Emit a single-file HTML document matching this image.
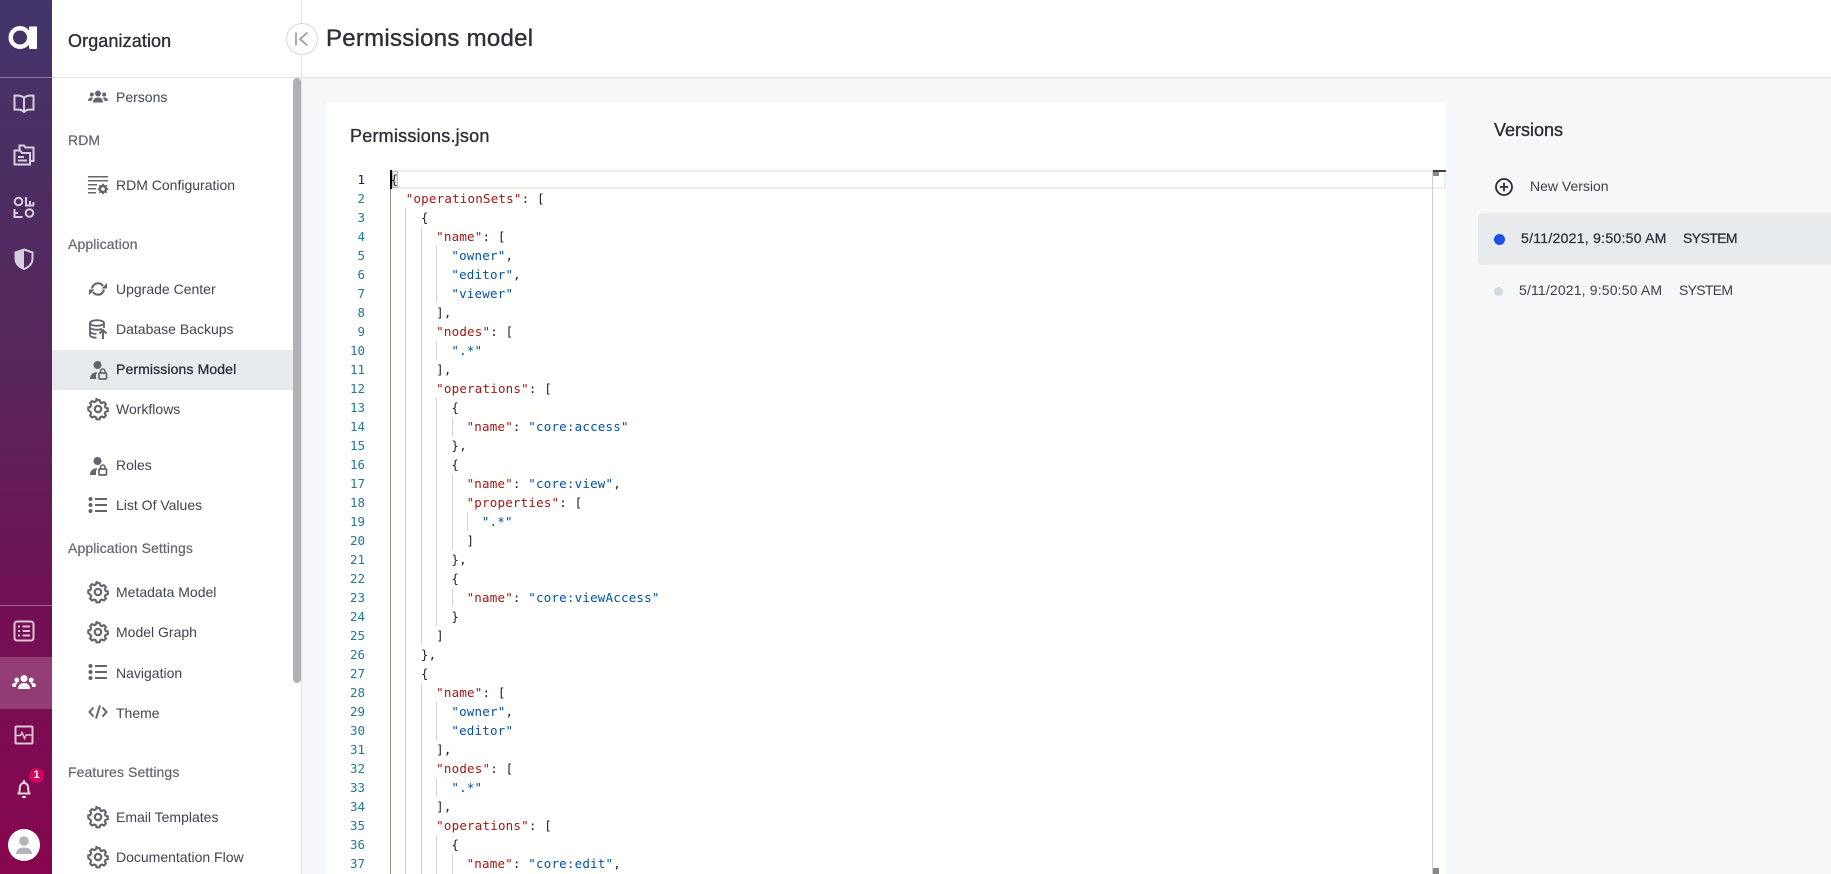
<!DOCTYPE html>
<html><head><meta charset="utf-8"><title>Permissions model</title>
<style>
*{box-sizing:border-box}
html,body{margin:0;padding:0;width:1831px;height:874px;overflow:hidden;background:#f6f7f9;font-family:"Liberation Sans",Arial,sans-serif;color:#333}
.a{position:absolute}
#rail{left:0;top:0;width:52px;height:874px;background:linear-gradient(180deg,#41356a 0%,#5a2459 45%,#720f52 70%,#87064e 100%)}
#side{left:52px;top:0;width:250px;height:874px;background:#fff;overflow:hidden}
#head{left:302px;top:0;width:1529px;height:78px;background:#fff;border-bottom:1px solid #dfe1e4}
.it{position:absolute;left:116px;font-size:14px;line-height:20px;color:#3f4450;white-space:nowrap}
.sec{position:absolute;left:68px;font-size:14px;line-height:20px;color:#62666f;white-space:nowrap;-webkit-text-stroke:.2px #62666f;letter-spacing:.1px}
.ic{position:absolute;left:88px;width:20px;height:20px;overflow:visible}
.r{position:absolute;left:12px;width:24px;height:24px;overflow:visible}
.h{position:absolute;font-size:18px;line-height:24px;color:#2b2f38;-webkit-text-stroke:.35px #2b2f38;white-space:nowrap}
.ln{position:absolute;width:30px;left:335px;text-align:right;font:12.5px/19px "DejaVu Sans Mono",monospace;color:#237893}
.c{position:absolute;left:390.5px;font:12.5px/19px "DejaVu Sans Mono",monospace;letter-spacing:.2px;word-spacing:-.12px;white-space:pre;color:#222}
.c i{font-style:normal;color:#a31515}.c b{font-weight:normal;color:#0451a5}
.g{position:absolute;width:1px;background:#d3d3d3}
.v{position:absolute;font-size:14px;line-height:20px;white-space:nowrap;color:#3a3e48}
</style></head><body>

<div class="a" id="rail"></div>
<div class="a" style="left:0;top:77px;width:52px;height:1px;background:rgba(255,255,255,.35)"></div>
<div class="a" style="left:0;top:605px;width:52px;height:1px;background:rgba(255,255,255,.35)"></div>
<div class="a" style="left:0;top:657px;width:52px;height:52px;background:rgba(255,255,255,.2)"></div>

<svg class="a" style="left:8px;top:24px" width="32" height="28" viewBox="0 0 32 28"><circle cx="12" cy="13.500" r="9.250" fill="none" stroke="#fff" stroke-width="4.500"/><rect x="21" y="2.500" width="8" height="22.500" fill="#fff"/></svg>

<svg class="r" style="top:91px" viewBox="0 0 24 24" fill="none" stroke="#d6cfdc" stroke-width="2"><path d="M12 7C10.500 5 8 4.500 2.500 4.500v14c4 0 6.500 0 8 1.300l1.500 1.200 1.500-1.200c1.500-1.300 4-1.300 8-1.300v-14C16 4.500 13.500 5 12 7zM12 7v13"/></svg>
<svg class="r" style="top:143px" viewBox="0 0 24 24" fill="none" stroke="#d6cfdc" stroke-width="2"><path d="M7.500 7V2.500h4.500l1.500 2h8V18H18"/><path d="M2.500 7.500H8l2 2.500h8v11.500H2.500z"/><path d="M6 14h6M6 17.500h9"/></svg>
<svg class="r" style="top:195px" viewBox="0 0 24 24" fill="none" stroke="#d6cfdc" stroke-width="2"><circle cx="6.500" cy="6.500" r="3.800"/><circle cx="17.500" cy="18" r="3.800"/><path d="M14 2v8.500h8M18 6v4.500M21.500 7v3.500M2.500 14v8h8M2.500 18h3.500"/></svg>
<svg class="r" style="top:247px" viewBox="0 0 24 24"><path d="M12 2.500l8.500 3v6c0 5-3.500 8.500-8.500 10.500-5-2-8.500-5.500-8.500-10.500v-6z" fill="none" stroke="#d6cfdc" stroke-width="2"/><path d="M12 2.500v19.500c-5-2-8.500-5.500-8.500-10.500v-6z" fill="#d6cfdc"/></svg>

<svg class="r" style="top:619px" viewBox="0 0 24 24" fill="none" stroke="#d9c6d4" stroke-width="2"><rect x="2.500" y="2.500" width="19" height="19" rx="2.500"/><path d="M6 7.500h2M6 12h2M6 16.500h2M10.500 7.500H18M10.500 12H18M10.500 16.500H18"/></svg>
<svg class="r" style="top:671px" viewBox="0 0 24 24" fill="#fff"><circle cx="12" cy="7.500" r="3.500"/><circle cx="4.800" cy="9" r="2.400"/><circle cx="19.200" cy="9" r="2.400"/><path d="M6 18c0-4 2.500-6 6-6s6 2 6 6zM2 16c-1 0-2-.5-2-1.500 0-1.500 1.800-3 4.500-3 .8 0 1.300.2 1.300.2-1.300 1-2 2.500-2.100 4.300zM22 16c1 0 2-.5 2-1.500 0-1.500-1.800-3-4.500-3-.8 0-1.300.2-1.300.2 1.300 1 2 2.500 2.100 4.300z"/></svg>
<svg class="r" style="top:723px" viewBox="0 0 24 24" fill="none" stroke="#d9c6d4" stroke-width="2"><rect x="3.500" y="3.500" width="17" height="17" rx="1"/><path d="M4 12.500h4.500l1.500-3 2.500 6 1.500-3.500H20" stroke-width="1.500"/></svg>
<svg class="r" style="top:776px" viewBox="0 0 24 24" fill="none" stroke="#e8d5e0" stroke-width="2"><path d="M7 17c.5-1 .8-2.500.8-5 0-3 1.800-5 4.200-5s4.200 2 4.200 5c0 2.500.3 4 .8 5M5.500 17.500h13M10 21h4M12 4v3"/></svg>
<div class="a" style="left:29px;top:768px;width:15px;height:15px;border-radius:50%;background:#d6005f;color:#fff;font-size:11px;font-weight:bold;line-height:15px;text-align:center">1</div>
<div class="a" style="left:8px;top:829px;width:32px;height:32px;border-radius:50%;background:#fff;overflow:hidden"><svg width="32" height="32" viewBox="0 0 32 32" fill="#b5b5b8"><circle cx="16" cy="12" r="4.800"/><path d="M8 25c0-4.500 3.500-6.500 8-6.500s8 2 8 6.500z"/></svg></div>

<div class="a" id="side"></div>
<div class="a" style="left:52px;top:77px;width:250px;height:1px;background:#dfe1e4"></div>
<div class="a" style="left:52px;top:350px;width:241px;height:40px;background:#e7ebee"></div>
<div class="a" style="left:293px;top:78px;width:8px;height:605px;background:#b1b1b5;border-radius:4px"></div>

<div class="h" style="left:68px;top:29px;letter-spacing:.1px">Organization</div>

<div class="it" style="top:87px">Persons</div>
<div class="sec" style="top:130px">RDM</div>
<div class="it" style="top:175px">RDM Configuration</div>
<div class="sec" style="top:234px">Application</div>
<div class="it" style="top:279px">Upgrade Center</div>
<div class="it" style="top:319px">Database Backups</div>
<div class="it" style="top:359px;color:#2b2f38;-webkit-text-stroke:.3px #2b2f38;letter-spacing:.12px">Permissions Model</div>
<div class="it" style="top:399px">Workflows</div>
<div class="it" style="top:455px">Roles</div>
<div class="it" style="top:495px">List Of Values</div>
<div class="sec" style="top:538px">Application Settings</div>
<div class="it" style="top:582px">Metadata Model</div>
<div class="it" style="top:622px">Model Graph</div>
<div class="it" style="top:663px">Navigation</div>
<div class="it" style="top:703px">Theme</div>
<div class="sec" style="top:762px">Features Settings</div>
<div class="it" style="top:807px">Email Templates</div>
<div class="it" style="top:847px">Documentation Flow</div>

<svg width="0" height="0" style="position:absolute"><defs>
<g id="gear" fill="none" stroke="#62656e" stroke-width="2.200"><path d="M10 1.300l1.600.2.800 2.300 1.500.7 2.200-1 2 2-1 2.200.7 1.600 2.300.7v2.800l-2.300.8-.7 1.500 1 2.300-2 2-2.200-1-1.500.6-.8 2.300H8.500l-.8-2.300-1.500-.6-2.300 1-2-2 1-2.300-.6-1.500L0 11.800V9l2.300-.7.6-1.600-1-2.200 2-2 2.300 1 1.500-.7.800-2.300z" transform="translate(.3 -.3) scale(.97)"/><circle cx="10" cy="10" r="3.200"/></g>
<g id="lock" fill="#62656e"><circle cx="9.500" cy="6" r="4"/><path d="M2 20c-.3-3 2-6.500 6.800-7 .5 1-.2 1.800-.8 3v4z"/><path d="M12.500 14v-1.500c0-1.400 1-2.500 2.300-2.500s2.300 1.100 2.300 2.500V14" fill="none" stroke="#62656e" stroke-width="1.600"/><rect x="11" y="14" width="7.500" height="6" rx="1" fill="none" stroke="#62656e" stroke-width="1.700"/></g>
<g id="list" fill="#62656e"><rect x="7" y="3" width="12" height="2"/><rect x="7" y="9" width="12" height="2"/><rect x="7" y="15" width="12" height="2"/><circle cx="2.500" cy="4" r="2"/><circle cx="2.500" cy="10" r="2"/><circle cx="2.500" cy="16" r="2"/></g>
</defs></svg>

<svg class="ic" style="top:87px" viewBox="0 0 20 20" fill="#62656e"><circle cx="10" cy="6.500" r="3"/><circle cx="3.800" cy="7.500" r="2"/><circle cx="16.200" cy="7.500" r="2"/><path d="M5 15.500c0-3.500 2-5 5-5s5 1.500 5 5zM0 13.800c0-1.800 1.500-3.400 4-3.400.6 0 1 .1 1.200.3-.9.900-1.700 2-1.800 3.300zM20 13.800c0-1.800-1.500-3.400-4-3.400-.6 0-1 .1-1.200.3.900.9 1.700 2 1.800 3.300z"/></svg>
<svg class="ic" style="top:175px" viewBox="0 0 20 20" fill="#62656e"><rect x="0" y="1" width="20" height="1.500"/><rect x="0" y="5" width="20" height="1.500"/><rect x="0" y="9" width="9" height="1.500"/><rect x="0" y="13" width="8" height="1.500"/><rect x="0" y="17" width="8" height="1.500"/><circle cx="15" cy="14" r="3" fill="none" stroke="#62656e" stroke-width="2.400"/><path d="M15 8.700v2M15 17.300v2M9.700 14h2M18.300 14h2M11.300 10.300l1.400 1.400M17.300 16.300l1.400 1.400M11.300 17.700l1.400-1.400M17.300 11.700l1.400-1.400" stroke="#62656e" stroke-width="1.800"/></svg>
<svg class="ic" style="top:279px" viewBox="0 0 20 20" fill="none" stroke="#62656e" stroke-width="2.200"><path d="M4 9.500C4.700 6.300 7 4.300 10 4.300c2.300 0 4 1 5 2.700M16 10.500c-.7 3.200-3 5.200-6 5.200-2.300 0-4-1-5-2.700"/><path d="M19 4v5.500h-5.500zM1 16v-5.500h5.500z" fill="#62656e" stroke="none"/></svg>
<svg class="ic" style="top:319px" viewBox="0 0 20 20" fill="none" stroke="#62656e" stroke-width="1.800"><ellipse cx="9" cy="4" rx="7" ry="2.800"/><path d="M2 4v12c0 1.600 3 2.800 6.500 2.800M16 4v5M2 8c0 1.600 3 2.800 7 2.800 2 0 3.500-.3 5-1M2 12.200c0 1.500 3 2.800 6.500 2.800"/><path d="M15 20v-8M11.500 14.500L15 11l3.500 3.500" stroke-width="2"/></svg>
<svg class="ic" style="top:359px"><use href="#lock"/></svg>
<svg class="ic" style="top:399px"><use href="#gear"/></svg>
<svg class="ic" style="top:455px"><use href="#lock"/></svg>
<svg class="ic" style="top:495px"><use href="#list"/></svg>
<svg class="ic" style="top:582px"><use href="#gear"/></svg>
<svg class="ic" style="top:622px"><use href="#gear"/></svg>
<svg class="ic" style="top:662px"><use href="#list"/></svg>
<svg class="ic" style="top:702px" viewBox="0 0 20 20" fill="none" stroke="#62656e" stroke-width="2"><path d="M5.500 5.500L1.500 10l4 4.500M14.500 5.500l4 4.500-4 4.500M12 3.500L8 16.500"/></svg>
<svg class="ic" style="top:807px"><use href="#gear"/></svg>
<svg class="ic" style="top:847px"><use href="#gear"/></svg>

<div class="a" id="head"></div>
<div class="a" style="left:301px;top:0;width:1px;height:874px;background:#dfe1e4"></div>
<div class="a" style="left:326px;top:24px;font-size:24px;line-height:30px;color:#2b2f38;-webkit-text-stroke:.35px #2b2f38;white-space:nowrap;letter-spacing:.27px">Permissions model</div>
<div class="a" style="left:286px;top:23px;width:32px;height:32px;border-radius:50%;background:#fff;border:1px solid #d8d8da"></div>
<svg class="a" style="left:294px;top:31px" width="16" height="16" viewBox="0 0 16 16" fill="none" stroke="#9a9ca3" stroke-width="1.700"><path d="M2 1.500v13M13.500 1.500L6 8l7.500 6.500"/></svg>

<!-- Card -->
<div class="a" style="left:326px;top:102px;width:1120px;height:772px;background:#fff;border-radius:4px 4px 0 0"></div>
<div class="h" style="left:350px;top:124px;letter-spacing:.22px">Permissions.json</div>

<div class="a" style="left:390px;top:170px;width:1056px;height:704px;background:#fffffe"></div>
<div class="a" style="left:391px;top:170px;width:1055px;height:19px;border:2px solid #eeeeee"></div>
<div class="a" style="left:390px;top:189px;width:1px;height:685px;background:#8d8d8d"></div>
<div class="a" style="left:390px;top:170px;width:2px;height:19px;background:#000"></div>
<div class="a" style="left:392px;top:171px;width:6px;height:17px;background:#e3eee8;border:1px solid #b9b9b9"></div>
<div class="a" style="left:1432px;top:170px;width:1px;height:704px;background:#cfcfcf"></div>
<div class="a" style="left:1433px;top:170px;width:13px;height:2px;background:#444"></div>
<div class="a" style="left:1433px;top:172px;width:6px;height:4px;background:#888"></div>
<div class="a" style="left:1433px;top:868px;width:6px;height:6px;background:#888"></div>

<div class="g" style="left:405px;top:208px;height:666px"></div>
<div class="g" style="left:421px;top:227px;height:418px"></div>
<div class="g" style="left:421px;top:683px;height:191px"></div>
<div class="g" style="left:436px;top:246px;height:57px"></div>
<div class="g" style="left:436px;top:341px;height:19px"></div>
<div class="g" style="left:436px;top:398px;height:228px"></div>
<div class="g" style="left:436px;top:702px;height:38px"></div>
<div class="g" style="left:436px;top:778px;height:19px"></div>
<div class="g" style="left:436px;top:835px;height:39px"></div>
<div class="g" style="left:452px;top:417px;height:19px"></div>
<div class="g" style="left:452px;top:474px;height:76px"></div>
<div class="g" style="left:452px;top:588px;height:19px"></div>
<div class="g" style="left:452px;top:854px;height:20px"></div>
<div class="g" style="left:467px;top:512px;height:19px"></div>

<div class="ln" style="top:170px;color:#0b216f">1</div><div class="ln" style="top:189px">2</div><div class="ln" style="top:208px">3</div><div class="ln" style="top:227px">4</div><div class="ln" style="top:246px">5</div><div class="ln" style="top:265px">6</div><div class="ln" style="top:284px">7</div><div class="ln" style="top:303px">8</div><div class="ln" style="top:322px">9</div><div class="ln" style="top:341px">10</div><div class="ln" style="top:360px">11</div><div class="ln" style="top:379px">12</div><div class="ln" style="top:398px">13</div><div class="ln" style="top:417px">14</div><div class="ln" style="top:436px">15</div><div class="ln" style="top:455px">16</div><div class="ln" style="top:474px">17</div><div class="ln" style="top:493px">18</div><div class="ln" style="top:512px">19</div><div class="ln" style="top:531px">20</div><div class="ln" style="top:550px">21</div><div class="ln" style="top:569px">22</div><div class="ln" style="top:588px">23</div><div class="ln" style="top:607px">24</div><div class="ln" style="top:626px">25</div><div class="ln" style="top:645px">26</div><div class="ln" style="top:664px">27</div><div class="ln" style="top:683px">28</div><div class="ln" style="top:702px">29</div><div class="ln" style="top:721px">30</div><div class="ln" style="top:740px">31</div><div class="ln" style="top:759px">32</div><div class="ln" style="top:778px">33</div><div class="ln" style="top:797px">34</div><div class="ln" style="top:816px">35</div><div class="ln" style="top:835px">36</div><div class="ln" style="top:854px">37</div>

<div class="c" style="top:170px">{</div>
<div class="c" style="top:189px">  <i>"operationSets"</i>: [</div>
<div class="c" style="top:208px">    {</div>
<div class="c" style="top:227px">      <i>"name"</i>: [</div>
<div class="c" style="top:246px">        <b>"owner"</b>,</div>
<div class="c" style="top:265px">        <b>"editor"</b>,</div>
<div class="c" style="top:284px">        <b>"viewer"</b></div>
<div class="c" style="top:303px">      ],</div>
<div class="c" style="top:322px">      <i>"nodes"</i>: [</div>
<div class="c" style="top:341px">        <b>".*"</b></div>
<div class="c" style="top:360px">      ],</div>
<div class="c" style="top:379px">      <i>"operations"</i>: [</div>
<div class="c" style="top:398px">        {</div>
<div class="c" style="top:417px">          <i>"name"</i>: <b>"core:access"</b></div>
<div class="c" style="top:436px">        },</div>
<div class="c" style="top:455px">        {</div>
<div class="c" style="top:474px">          <i>"name"</i>: <b>"core:view"</b>,</div>
<div class="c" style="top:493px">          <i>"properties"</i>: [</div>
<div class="c" style="top:512px">            <b>".*"</b></div>
<div class="c" style="top:531px">          ]</div>
<div class="c" style="top:550px">        },</div>
<div class="c" style="top:569px">        {</div>
<div class="c" style="top:588px">          <i>"name"</i>: <b>"core:viewAccess"</b></div>
<div class="c" style="top:607px">        }</div>
<div class="c" style="top:626px">      ]</div>
<div class="c" style="top:645px">    },</div>
<div class="c" style="top:664px">    {</div>
<div class="c" style="top:683px">      <i>"name"</i>: [</div>
<div class="c" style="top:702px">        <b>"owner"</b>,</div>
<div class="c" style="top:721px">        <b>"editor"</b></div>
<div class="c" style="top:740px">      ],</div>
<div class="c" style="top:759px">      <i>"nodes"</i>: [</div>
<div class="c" style="top:778px">        <b>".*"</b></div>
<div class="c" style="top:797px">      ],</div>
<div class="c" style="top:816px">      <i>"operations"</i>: [</div>
<div class="c" style="top:835px">        {</div>
<div class="c" style="top:854px">          <i>"name"</i>: <b>"core:edit"</b>,</div>

<!-- Versions -->
<div class="h" style="left:1494px;top:118px">Versions</div>
<svg class="a" style="left:1494px;top:177px" width="20" height="20" viewBox="0 0 20 20" fill="none" stroke="#2b2f38" stroke-width="1.800"><circle cx="10" cy="10" r="8"/><path d="M10 5.800v8.400M5.800 10h8.400"/></svg>
<div class="v" style="left:1530px;top:176px">New Version</div>
<div class="a" style="left:1478px;top:213px;width:353px;height:52px;background:#e7ebee;border-radius:4px 0 0 4px"></div>
<div class="a" style="left:1494px;top:234px;width:11px;height:11px;border-radius:50%;background:#1d4fe8"></div>
<div class="v" style="left:1521px;top:228px;color:#2b2f38;-webkit-text-stroke:.25px #2b2f38;letter-spacing:.28px">5/11/2021, 9:50:50 AM</div>
<div class="v" style="left:1683px;top:228px;color:#2b2f38;-webkit-text-stroke:.25px #2b2f38;letter-spacing:-.6px">SYSTEM</div>
<div class="a" style="left:1494px;top:287px;width:9px;height:9px;border-radius:50%;background:#d0dae0"></div>
<div class="v" style="left:1519px;top:280px;letter-spacing:.16px">5/11/2021, 9:50:50 AM</div>
<div class="v" style="left:1679px;top:280px;letter-spacing:-.7px">SYSTEM</div>
</body></html>
